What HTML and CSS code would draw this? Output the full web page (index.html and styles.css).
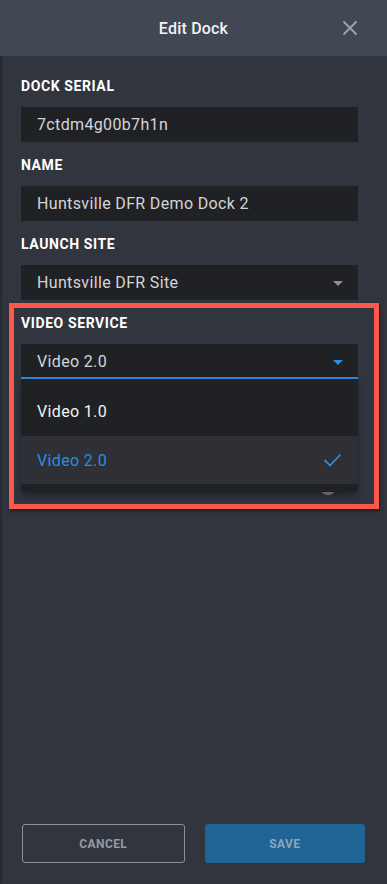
FILE: index.html
```html
<!DOCTYPE html>
<html lang="en">
<head>
<meta charset="utf-8">
<title>Edit Dock</title>
<link rel="stylesheet" href="styles.css">
</head>
<body>
<div class="panel">
  <header class="head">
    <h1 class="title">Edit Dock</h1>
    <button class="close" aria-label="Close">
      <svg width="16" height="16" viewBox="0 0 16 16"><path d="M1.5 1.5 L14.5 14.5 M14.5 1.5 L1.5 14.5" stroke="#9aa2ae" stroke-width="2" fill="none"/></svg>
    </button>
  </header>

  <main class="body">
    <div class="field">
      <label class="label">Dock Serial</label>
      <div class="input">7ctdm4g00b7h1n</div>
    </div>
    <div class="field">
      <label class="label">Name</label>
      <div class="input">Huntsville DFR Demo Dock 2</div>
    </div>
    <div class="field">
      <label class="label">Launch Site</label>
      <div class="input select">
        <span>Huntsville DFR Site</span>
        <span class="caret"></span>
      </div>
    </div>
    <div class="field">
      <label class="label">Video Service</label>
      <div class="select-wrap">
        <div class="input select open">
          <span>Video 2.0</span>
          <span class="caret blue"></span>
        </div>
        <ul class="menu">
          <li class="option">Video 1.0</li>
          <li class="option selected">
            <span>Video 2.0</span>
            <svg width="19" height="14" viewBox="0 0 19 14"><polyline points="1.5,7 7,12.5 17.5,1.5" fill="none" stroke="#2b8de0" stroke-width="1.8"/></svg>
          </li>
        </ul>
      </div>
    </div>
    <div class="toggle-row">
      <span class="toggle-label">Use the new player for live view</span>
      <span class="toggle"><span class="knob"></span></span>
    </div>
  </main>

  <footer class="actions">
    <button class="btn btn-cancel">Cancel</button>
    <button class="btn btn-save">Save</button>
  </footer>

  <div class="highlight"></div>
</div>
</body>
</html>
```

FILE: styles.css
```css
* { box-sizing: border-box; }
html, body {
  margin: 0;
  padding: 0;
  height: 100%;
  background: #31353e;
  font-family: Roboto, "Liberation Sans", sans-serif;
}
.panel {
  position: relative;
  display: flex;
  flex-direction: column;
  height: 884px;
  background: #31353e;
  box-shadow: inset 3px 0 3px -2px rgba(0,0,0,0.35);
}
.head {
  height: 56px;
  flex: none;
  background: #414753;
  display: flex;
  align-items: center;
  justify-content: center;
  position: relative;
}
.title {
  margin: 0;
  font-size: 16px;
  font-weight: 500;
  color: #f2f3f5;
  letter-spacing: 0.2px;
}
.close {
  position: absolute;
  right: 29px;
  top: 20px;
  width: 16px;
  height: 16px;
  padding: 0;
  border: 0;
  background: none;
  display: flex;
}
.body {
  flex: 1;
  padding: 22px 29px 0 21px;
}
.field { margin-bottom: 15px; }
.label {
  display: block;
  height: 16px;
  line-height: 16px;
  margin-bottom: 13px;
  font-size: 14px;
  font-weight: 700;
  text-transform: uppercase;
  letter-spacing: 0.6px;
  color: #ffffff;
}
.input {
  height: 35px;
  background: #202125;
  padding: 0 16px;
  display: flex;
  align-items: center;
  font-size: 16px;
  letter-spacing: 0.35px;
  color: #d4d5d8;
}
.select { justify-content: space-between; padding-right: 15px; }
.caret {
  width: 0;
  height: 0;
  border-left: 5px solid transparent;
  border-right: 5px solid transparent;
  border-top: 5px solid #8e9096;
  margin-top: 1px;
}
.caret.blue { border-top-color: #2b8de0; }
.select-wrap { position: relative; }
.select.open { border-bottom: 2px solid #2b8de0; padding-top: 2px; }
.menu {
  position: absolute;
  left: 0;
  right: 0;
  top: 100%;
  margin: 0;
  padding: 8px 0;
  list-style: none;
  background: #202125;
  border-radius: 0 0 4px 4px;
  box-shadow: 0 4px 8px rgba(0,0,0,0.35);
  z-index: 2;
}
.option {
  height: 49px;
  padding: 0 16px;
  display: flex;
  align-items: center;
  justify-content: space-between;
  font-size: 16px;
  letter-spacing: 0.35px;
  color: #f2f2f4;
}
.option.selected {
  height: 48px;
  background: #2f3035;
  color: #2b8de0;
}
.toggle-row {
  margin-top: 92px;
  height: 24px;
  display: flex;
  align-items: center;
  justify-content: space-between;
  font-size: 16px;
  color: #9a9ca2;
}
.toggle {
  position: relative;
  width: 30px;
  height: 2px;
  margin-top: 16px;
  background: #5b5e66;
  margin-right: 8px;
}
.knob {
  position: absolute;
  left: 0;
  top: -11px;
  width: 16px;
  height: 16px;
  border-radius: 50%;
  background: #8a8b8e;
}
.actions {
  flex: none;
  display: flex;
  gap: 20px;
  padding: 0 22px 21px 22px;
}
.btn {
  flex: 1;
  height: 39px;
  border-radius: 3px;
  font-family: Roboto, "Liberation Sans", sans-serif;
  font-size: 12px;
  font-weight: 700;
  text-transform: uppercase;
  letter-spacing: 0.4px;
}
.btn-cancel {
  background: transparent;
  border: 1px solid #8b919b;
  color: #959ba5;
}
.btn-save {
  background: #1e6494;
  border: 0;
  color: #8ea6ba;
}
.highlight {
  position: absolute;
  left: 9px;
  top: 303px;
  width: 370px;
  height: 206px;
  border: 5px solid #fd584b;
  box-shadow: 1px 2px 3px rgba(0,0,0,0.45);
  pointer-events: none;
  z-index: 5;
}
```
